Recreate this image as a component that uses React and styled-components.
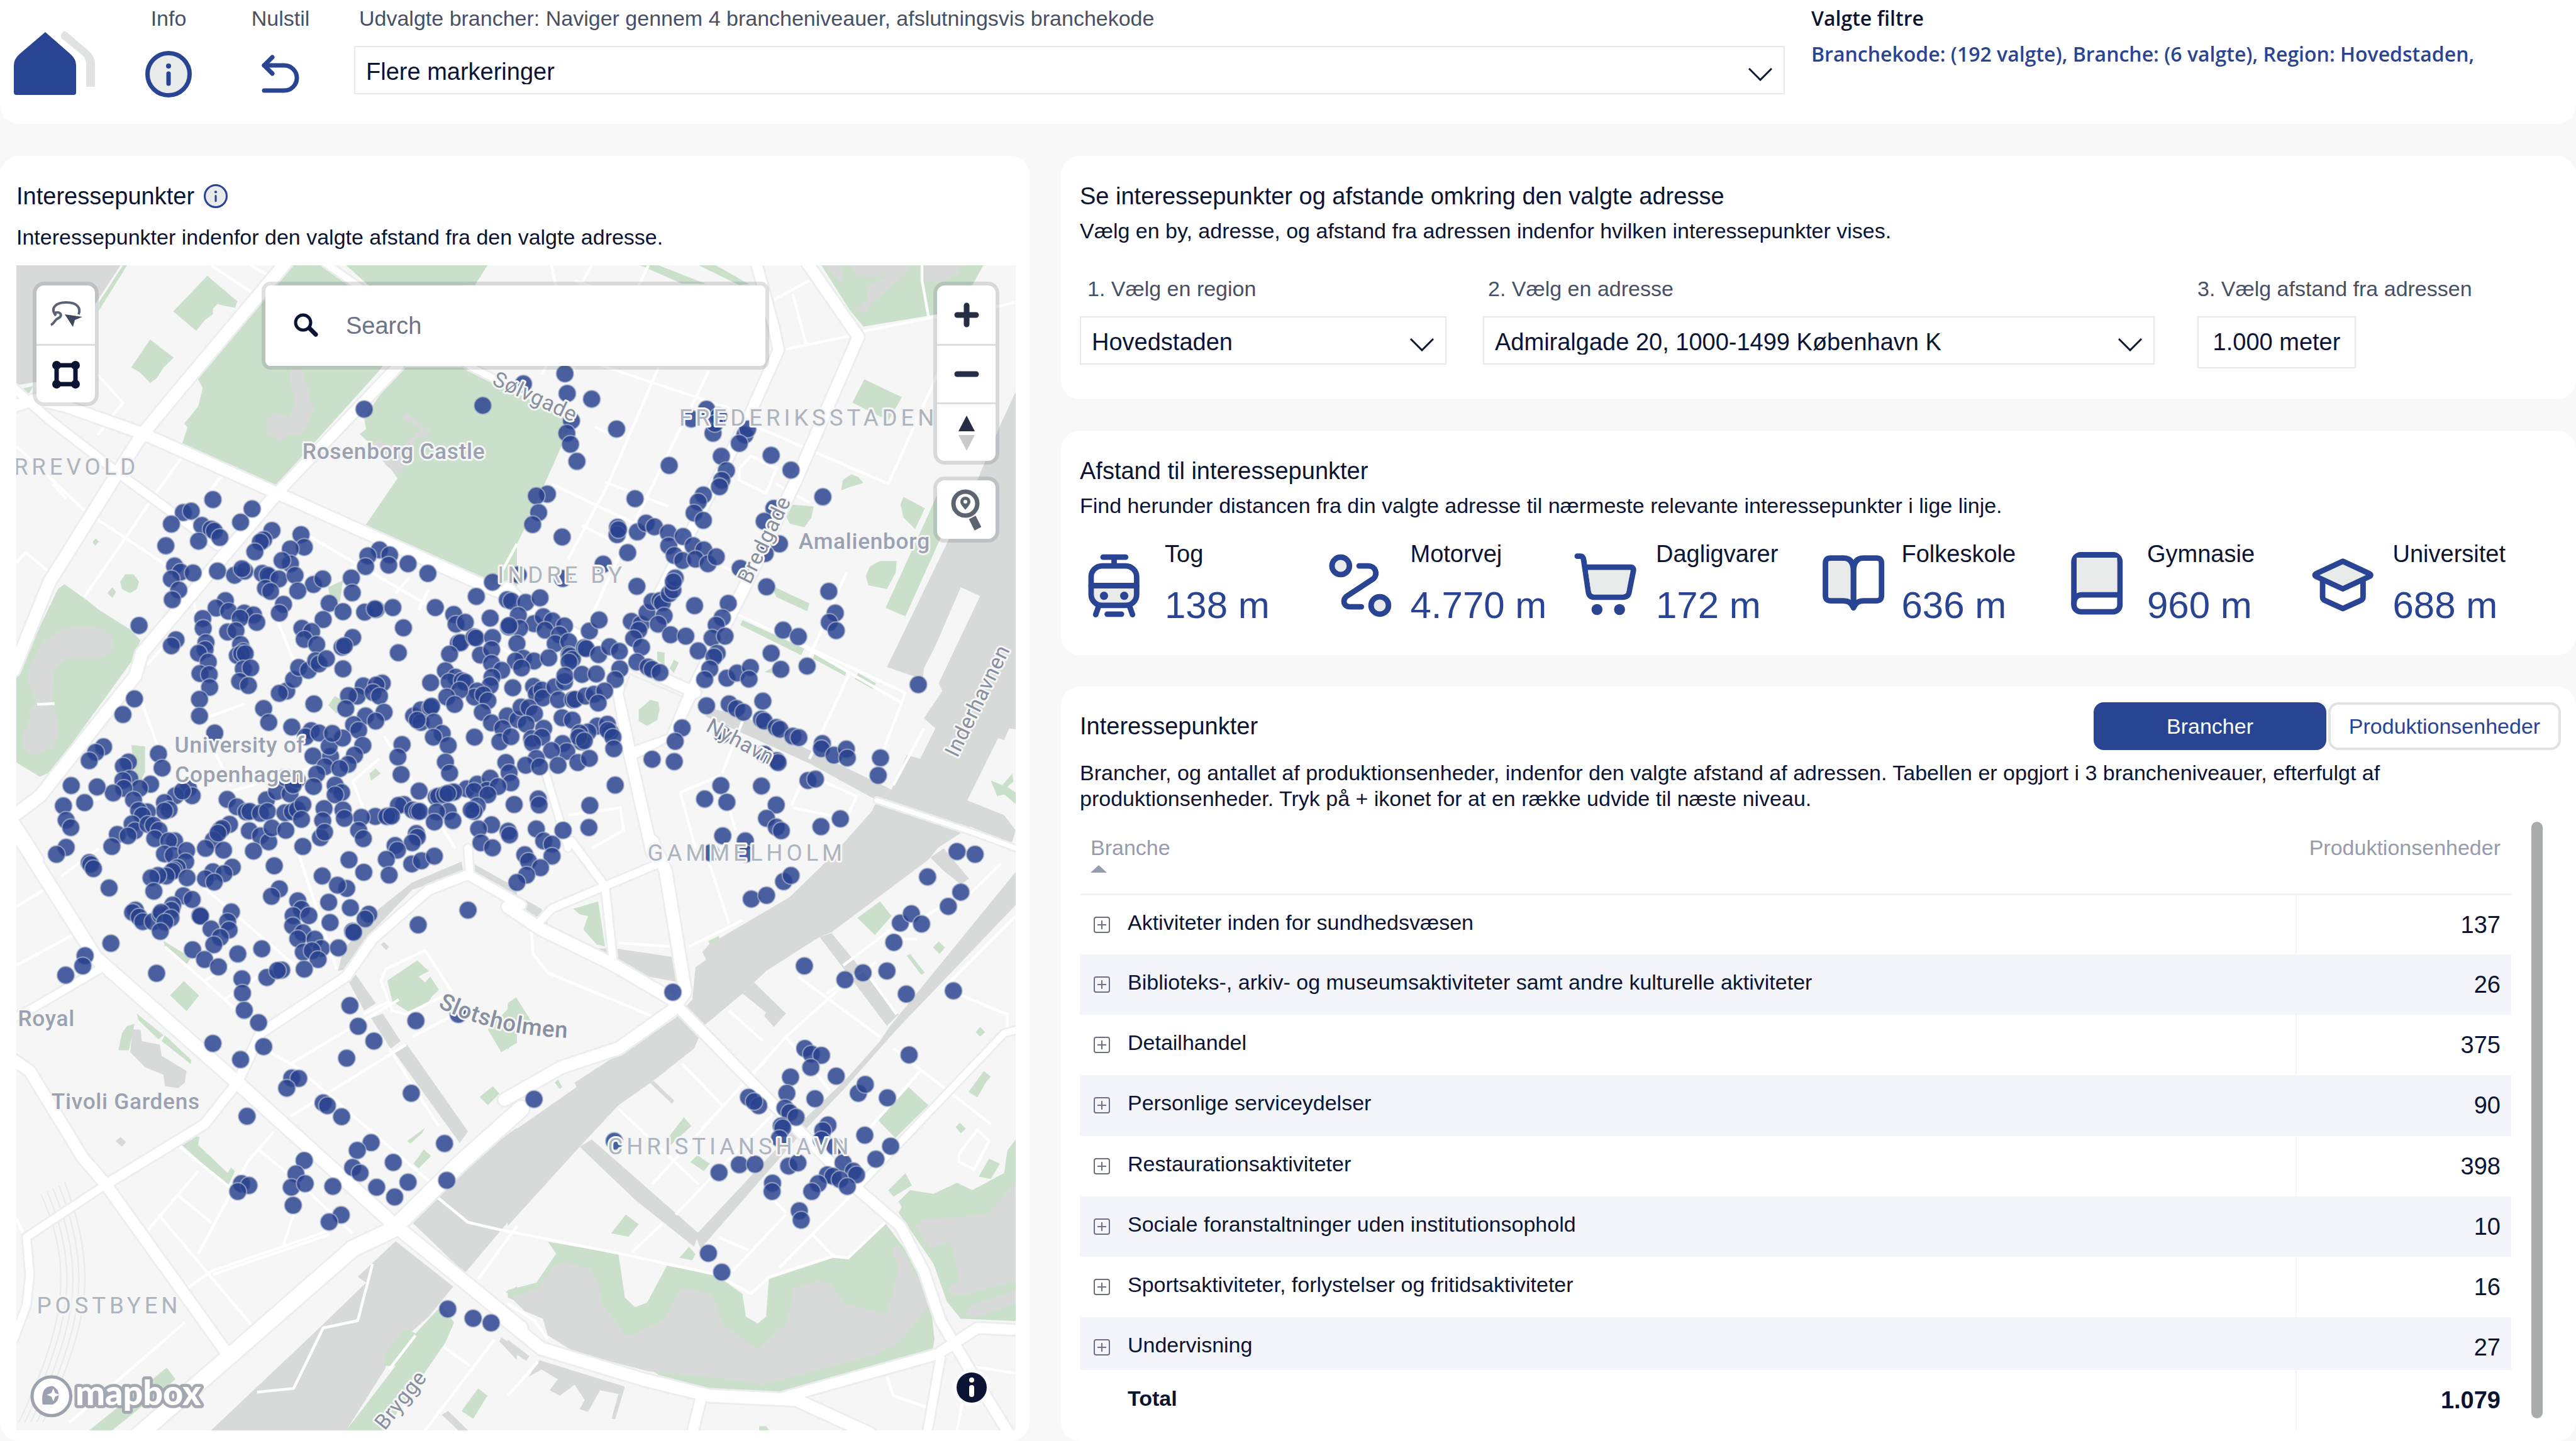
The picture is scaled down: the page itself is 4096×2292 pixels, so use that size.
import * as React from 'react'
import styled, { createGlobalStyle, ThemeProvider } from 'styled-components'

const theme = {
    colors: {
        primary: '#2a4494',
        ink: '#0b1433',
        label: '#485065',
        muted: '#979bae',
        border: '#e9eaeb',
        soft: '#e9ebeb',
        stripe: '#f4f5fa',
        page: '#f8f8f8',
        white: '#ffffff',
        land: '#f6f6f6',
        park: '#cbe0cb',
        water: '#d8dad9',
        casing: '#ecedee',
    },
    sizes: { body: '34px', title: '38px', value: '60px' },
}

const GlobalStyle = createGlobalStyle`
    * { box-sizing: border-box; }
    body {
        margin: 0;
        background: ${theme.colors.page};
        color: ${theme.colors.ink};
        font-family: 'Liberation Sans', Arial, sans-serif;
        font-size: ${theme.sizes.body};
        line-height: 40px;
    }
    button, select, input { font: inherit; color: inherit; }
`

const Page = styled.div`
    display: flex;
    flex-direction: column;
    gap: 51px;
    min-height: 100vh;
`
const Header = styled.header`
    display: grid;
    grid-template-columns: 188px 160px 196px minmax(0, 2294fr) minmax(0, 1258fr);
    height: 197px;
    padding-top: 9px;
    background: ${(props) => props.theme.colors.white};
    border-radius: 0 0 30px 30px;
`
const Logo = styled.svg`
    width: 130px;
    height: 106px;
    margin: 39px 0 0 22px;
`
const ToolButton = styled.button`
    display: flex;
    flex-direction: column;
    align-items: center;
    gap: 32px;
    padding: 0;
    border: none;
    background: none;
    color: ${(props) => props.theme.colors.label};
    line-height: 40px;
    cursor: pointer;
`
const IconSlot = styled.span`
    display: flex;
    align-items: center;
    height: 74px;
`
const FieldBox = styled.div`
    display: flex;
    flex-direction: column;
    align-items: ${(props) => (props.$fit ? 'flex-start' : 'stretch')};
    gap: 24px;
    padding-left: ${(props) => (props.$fit ? 10 : 0)}px;
`
const HeaderField = styled(FieldBox)`
    padding-left: 19px;
`
const FieldLabel = styled.label`
    padding-left: ${(props) => props.$inset || 0}px;
    color: ${(props) => props.theme.colors.label};
`
const SelectWrap = styled.div`
    position: relative;
    svg {
        position: absolute;
        right: 20px;
        top: 34px;
        width: 38px;
        height: 22px;
        pointer-events: none;
    }
`
const StyledSelect = styled.select`
    appearance: none;
    width: 100%;
    height: 77px;
    padding: 4px 70px 0 17px;
    border: 2px solid ${(props) => props.theme.colors.border};
    border-radius: 0;
    background: ${(props) => props.theme.colors.white};
    font-size: ${(props) => props.theme.sizes.title};
`
const DistanceInput = styled.input`
    width: 252px;
    height: 83px;
    padding: 0;
    border: 2px solid ${(props) => props.theme.colors.border};
    background: ${(props) => props.theme.colors.white};
    font-size: ${(props) => props.theme.sizes.title};
    text-align: center;
`
const FilterSummary = styled.div`
    padding-left: 42px;
    font-family: 'Open Sans', 'Noto Sans', sans-serif;
    font-size: 32px;
    font-weight: 600;
    p {
        margin: 0;
    }
    p + p {
        margin-top: 17px;
        color: ${(props) => props.theme.colors.primary};
    }
`
const Columns = styled.main`
    display: grid;
    flex: 1;
    grid-template-columns: minmax(0, 1637fr) minmax(0, 2409fr);
    gap: 50px;
`
const Stack = styled.div`
    display: flex;
    flex-direction: column;
    gap: 50px;
`
const Card = styled.section`
    padding: 42px 24px 45px 30px;
    background: ${(props) => props.theme.colors.white};
    border-radius: 30px;
`
const MapCard = styled(Card)`
    padding: 42px 22px 16px 26px;
`
const FilterCard = styled(Card)`
    padding-bottom: 49px;
`
const TableCard = styled(Card)`
    display: flex;
    flex: 1;
    flex-direction: column;
    padding: 25px 24px 18px 30px;
`
const Title = styled.h2`
    display: flex;
    align-items: center;
    gap: 15px;
    margin: 0;
    font-size: ${(props) => props.theme.sizes.title};
    font-weight: 400;
    line-height: 44px;
`
const Text = styled.p`
    margin: ${(props) => props.$top || 13}px 0 0;
    line-height: ${(props) => props.$leading || 40}px;
`
const FilterRow = styled.div`
    display: grid;
    grid-template-columns: minmax(0, 583fr) minmax(0, 1068fr) minmax(0, 588fr);
    gap: 58px;
    margin-top: 52px;
`
const DistanceList = styled.ul`
    display: grid;
    grid-template-columns: repeat(6, minmax(0, 1fr));
    margin: 35px 16px 0 -4px;
    padding: 0;
    list-style: none;
`
const DistanceItem = styled.li`
    display: flex;
    gap: 22px;
    white-space: nowrap;
    svg {
        flex: none;
        width: 117px;
        height: 117px;
        margin-top: 14px;
    }
`
const DistanceName = styled.div`
    font-size: ${(props) => props.theme.sizes.title};
    line-height: 44px;
`
const DistanceValue = styled.div`
    margin-top: 26px;
    color: ${(props) => props.theme.colors.primary};
    font-size: ${(props) => props.theme.sizes.value};
    line-height: 68px;
`
const TableHeading = styled.div`
    display: flex;
    align-items: center;
    justify-content: space-between;
`
const Toggle = styled.div`
    display: flex;
    gap: 3px;
`
const ToggleButton = styled.button`
    width: 370px;
    height: 76px;
    padding: 0;
    border: 4px solid ${(props) => (props.$active ? props.theme.colors.primary : '#e1e3e3')};
    border-radius: 16px;
    background: ${(props) => (props.$active ? props.theme.colors.primary : props.theme.colors.white)};
    color: ${(props) => (props.$active ? props.theme.colors.white : props.theme.colors.primary)};
    cursor: pointer;
`
const TableArea = styled.div`
    display: flex;
    flex: 1;
    gap: 32px;
    margin-top: 16px;
    padding-right: 29px;
`
const Table = styled.table`
    flex: 1;
    border-collapse: collapse;
    th, td {
        padding: 0 17px;
        text-align: left;
        vertical-align: middle;
    }
    tr > :last-child {
        width: 342px;
        text-align: right;
    }
`
const HeadCell = styled.th`
    height: 115px;
    border-bottom: 3px solid #f2f3fa;
    color: ${(props) => props.theme.colors.muted};
    font-weight: 400;
    && {
        padding-top: 21px;
        vertical-align: top;
    }
    svg {
        display: block;
        width: 26px;
        height: 12px;
        margin-top: 8px;
    }
`
const BodyRow = styled.tr`
    height: 96px;
    &:nth-child(even) {
        background: ${(props) => props.theme.colors.stripe};
    }
    &:last-child {
        height: 84px;
    }
    &:last-child td {
        padding-top: 12px;
    }
`
const NumberCell = styled.td`
    border-left: 2px solid ${(props) => props.theme.colors.stripe};
    font-size: ${(props) => props.theme.sizes.title};
`
const NameCell = styled.div`
    display: flex;
    align-items: center;
    gap: 28px;
    padding: 0 0 8px 5px;
`
const ExpandButton = styled.button`
    display: flex;
    padding: 8px 0 0;
    border: none;
    background: none;
    cursor: pointer;
    svg {
        width: 26px;
        height: 26px;
    }
`
const TotalRow = styled.tr`
    height: 95px;
    font-weight: 700;
    td:first-child {
        padding: 0 0 6px 76px;
    }
`
const ScrollThumb = styled.div`
    width: 18px;
    margin-bottom: 18px;
    border-radius: 9px;
    background: #a9abad;
`
const MapFrame = styled.div`
    position: relative;
    margin-top: 25px;
`
const MapSvg = styled.svg`
    display: block;
    width: 100%;
    height: auto;
    background: ${(props) => props.theme.colors.land};
    text {
        font-family: Roboto, 'Noto Sans', sans-serif;
        paint-order: stroke;
        stroke: #f6f6f6;
        stroke-width: 8px;
        stroke-linejoin: round;
    }
`
const Floating = styled.div`
    position: absolute;
    display: flex;
    flex-direction: column;
    border: 6px solid rgba(70, 84, 96, 0.18);
    border-radius: 18px;
    background: ${(props) => props.theme.colors.white};
    background-clip: padding-box;
`
const DrawTools = styled(Floating)`
    top: 26px;
    left: 26px;
`
const ZoomTools = styled(Floating)`
    top: 26px;
    right: 26px;
`
const PinTools = styled(Floating)`
    top: 336px;
    right: 26px;
`
const MapButton = styled.button`
    display: flex;
    align-items: center;
    justify-content: center;
    width: 93px;
    height: 93px;
    padding: 0;
    border: none;
    background: none;
    cursor: pointer;
    & + & {
        border-top: 3px solid #dcdedf;
    }
    svg {
        width: 60px;
        height: 66px;
    }
`
const SearchBox = styled(Floating)`
    top: 26px;
    left: 390px;
    right: 392px;
    flex-direction: row;
    align-items: center;
    height: 140px;
    padding-left: 42px;
    border-radius: 14px;
    svg {
        flex: none;
        width: 44px;
        height: 44px;
    }
`
const SearchInput = styled.input`
    flex: 1;
    min-width: 0;
    height: 100%;
    padding: 0 0 0 42px;
    border: none;
    outline: none;
    background: none;
    font-size: ${(props) => props.theme.sizes.title};
    &::placeholder {
        color: #6d7486;
        opacity: 1;
    }
`
const AttributionButton = styled.button`
    position: absolute;
    right: 40px;
    bottom: 38px;
    padding: 6px;
    border: none;
    border-radius: 50%;
    background: rgba(255, 255, 255, 0.5);
    cursor: pointer;
    svg {
        display: block;
        width: 48px;
        height: 48px;
    }
`

const sheets = {
    nw: { x: 0, y: 560, w: 1120, h: 1280 },
    ne: { x: 1100, y: 560, w: 1140, h: 1280 },
    sw: { x: 0, y: 1840, w: 1120, h: 1284 },
    se: { x: 1100, y: 1840, w: 1140, h: 1284 },
    west: { x: 0, y: 1400, w: 800, h: 760 },
    centre: { x: 700, y: 1150, w: 800, h: 800 },
}

const project = (sheet, text) => {
    const { x, y, w, h } = sheets[sheet]
    return text
        .trim()
        .split(/\s+/)
        .map((pair) => pair.split(',').map(Number))
        .map(([px, py]) => [Math.round(x + (px * w) / 1568), Math.round(y + (py * h) / 1568)])
}
const toPoints = (sheet, text) => project(sheet, text).map((point) => point.join(',')).join(' ')

const parks = {
    nw: [
        '372,20 385,20 300,140 300,118',
        '628,48 720,115 712,132 680,128 660,122 645,135 645,150 620,165 595,193 525,142',
        '455,217 527,265 495,292 475,320 455,332 425,305 397,290',
        '890,20 985,20 1110,110 1240,200 1150,300 830,610 550,498 568,450 558,440 600,395 615,345 598,318',
        '1050,20 1478,20 1440,72 1120,75',
        '1210,290 1420,290 1568,365 1568,885 1470,860 1100,720 1205,585 1150,515 1090,468 1110,455 1105,425',
        '195,866 265,910 300,935 390,985 425,1015 400,1070 155,1365 120,1378 49,1340 49,1110 175,880',
        '380,840 405,840 422,860 415,880 393,890 370,880 364,860',
        '325,890 340,875 352,887 340,903',
        '280,755 290,745 300,753 288,764',
        '398,1293 440,1297 440,1365 422,1400 405,1350',
        '1120,1370 1140,1356 1155,1370 1125,1388',
        '995,1188 1015,1164 1040,1175 1020,1210',
        '995,875 1040,856 1030,915 1000,900',
        '49,350 100,340 90,358 49,372',
    ],
    ne: [
        '28,360 195,430 185,450 50,720 0,810 0,360',
        '395,20 450,20 590,68 520,68',
        '570,20 620,20 720,70 690,72',
        '935,20 1418,20 1385,72 1280,150 1060,183 1020,140',
        '1063,322 1175,370 1155,400 1135,432 1085,410 1028,385',
        '995,617 998,590 1025,575 1045,582 1060,598 1015,610',
        '830,685 850,655 912,660 905,690 885,715 840,705',
        '1170,655 1180,635 1243,665 1215,720 1180,690',
        '1300,590 1245,700 1127,930 1185,952 1290,745',
        '1068,845 1080,820 1110,805 1160,805 1157,835 1130,880 1075,870',
        '785,870 900,918 892,938 800,900',
        '700,962 885,1037 875,1055 693,975',
        '915,1050 1012,1095 1005,1110 910,1065',
        '1045,1103 1098,1130 1090,1145 1035,1118',
        '445,1045 468,1048 467,1080 445,1070',
        '483,1090 495,1067 510,1075 495,1103',
        '765,1100 815,1075 810,1105',
    ],
    sw: [
        '495,245 580,290 565,308 500,262',
        '557,352 603,390 565,431 515,390',
        '415,437 495,495 480,505 420,455',
        '500,495 580,560 578,572 490,510',
        '385,470 408,465 390,535 358,535 370,490',
        '545,780 580,758 605,765 600,785 690,860 700,845 712,855 690,895',
        '270,1541 505,1375 532,1405 340,1541',
        '1175,350 1265,297 1300,325 1270,340 1290,355 1305,340 1332,375 1310,392 1300,405 1240,433 1190,405',
        '1455,658 1495,630 1515,650 1480,680',
        '1568,400 1480,480 1520,540 1568,515',
        '1235,775 1290,740 1280,755 1245,782',
        '1255,835 1285,797 1308,815 1270,848',
        '1400,1490 1450,1430 1478,1450 1435,1510',
        '1533,1175 1568,1160 1568,1190',
    ],
    se: [
        '195,160 270,140 290,260 265,255 225,215 240,180 215,175',
        '0,410 25,395 75,465 40,465 0,535',
        '1043,185 1110,140 1145,180 1095,230',
        '598,245 630,232 632,248 605,262',
        '1190,285 1200,280 1243,330 1232,335',
        '1268,262 1285,247 1304,262 1287,280',
        '1395,487 1408,473 1423,487 1408,498',
        '1195,632 1255,680 1155,767 1105,720',
        '1420,590 1440,605 1425,620 1400,660 1374,645',
        '1335,738 1348,726 1366,742 1350,755',
        '1405,870 1435,822 1468,835 1440,875',
        '1135,905 1185,860 1205,893 1150,922',
        '308,1020 352,970 390,995 360,1028',
        '480,765 525,712 547,735 480,790',
        '545,830 565,812 603,835 585,855',
        '512,1085 540,1055 560,1075 550,1090',
        '750,1530 770,1530 780,1541 750,1541',
        '140,620 150,612 162,632 155,637',
        '120,1042 330,1075 350,1190 380,1215 415,1203 475,1105 620,1130 700,1180 710,1240 745,1258 770,1240 778,1140 970,1085 1015,1088 1125,992 1200,1080 1260,1200 1272,1300 1265,1335 820,1443 600,1430 450,1395 300,1300 0,1190 0,1170 85,1150 145,1073',
        '1514,770 1490,800 1480,860 1385,905 1340,885 1270,915 1200,905 1165,935 1175,950 1165,965 1270,1100 1310,1200 1350,1245 1514,1252',
    ],
}

const waters = {
    nw: [
        '49,20 365,20 290,120 110,330 49,338',
        '880,290 915,295 950,400 930,450 905,472 880,470 845,488 810,465 808,430 830,410 875,425 895,385 880,330',
        '1232,410 1305,460 1295,475 1270,475 1245,500 1235,540 1210,578 1170,550 1130,500 1140,485 1180,495 1225,500 1275,452 1218,425',
        '255,978 310,985 343,1010 335,1050 300,1065 200,1065 165,1090 160,1180 180,1260 160,1300 100,1323 70,1300 72,1260 90,1230 88,1200 110,1180 85,1130 90,1080 130,1020 190,985',
    ],
    ne: [
        '945,20 990,20 1002,50 995,68 975,50',
        '1020,20 1195,20 1195,35 1085,120 1065,145 1030,142 1070,110 1072,75 1140,45 1095,52 1040,48',
        '1240,20 1350,20 1345,40 1290,65 1235,60',
        '1514,355 1470,440 1400,590 1130,1087 1238,1120 1240,1090 1275,1030 1350,875 1408,898 1285,1130 1295,1150 1240,1222 1275,1250 1230,1330 1190,1320 1145,1412 1100,1440 1085,1470 975,1580 1260,1580 1380,1510 1500,1560 1514,1520 1480,1480 1370,1440 1462,1275 1480,1280 1495,1250 1514,1252',
        '600,1195 700,1215 860,1290 1145,1412 1100,1440 905,1345 590,1218',
    ],
    sw: [
        '400,480 425,480 430,510 485,520 490,550 565,590 560,620 540,635 500,630 495,600 440,580 395,540',
        '1025,325 1040,270 1150,160 1250,90 1400,35 1405,65 1250,110 1130,220 1080,315',
        '1435,40 1568,105 1568,150 1440,75',
        '1055,350 1080,335 1140,410 1105,430',
        '1125,450 1160,437 1215,510 1185,530',
        '1195,540 1235,520 1420,750 1395,780',
        '1568,740 1470,800 1250,990 1410,1125 1570,960',
        '1200,1040 1375,1160 1300,1240 1165,1345 1170,1375 1050,1541 640,1541 950,1285 1110,1150 1085,1135',
        '350,775 365,765 382,778 370,790',
        '1155,255 1163,248 1180,260 1172,270',
        '1520,1295 1568,1320 1568,1355 1515,1305',
        '1340,1500 1360,1490 1420,1541 1390,1541',
    ],
    se: [
        '0,110 100,160 120,200 270,265 320,265 505,290 515,355 300,320 100,200 0,140',
        '990,0 840,130 600,255 580,275 592,295 560,315 550,400 500,450 295,565 200,620 205,632 0,760 0,1000 215,790 330,680 430,618 555,530 585,470 700,385 735,355 770,325 930,235 965,222 1255,30 1290,-10 1000,-10',
        '215,790 250,770 570,1020 555,1055 380,930',
        '560,1025 880,720 1010,610 1110,510 1140,470 1514,62 1514,150 1160,480 1000,640 870,760 575,1060',
        '930,235 965,225 1165,440 1130,470',
        '700,385 735,355 830,437 793,472 765,445 770,435',
        '425,622 435,615 496,668 490,676',
        '1260,25 1300,0 1375,80 1350,95 1300,60',
        '10,1190 90,1165 140,1105 170,1095 245,1115 270,1150 280,1205 355,1292 465,1250 510,1175 530,1165 605,1180 625,1215 645,1265 745,1328 835,1255 850,1165 930,1145 965,1155 1000,1205 1130,1233 1165,1110 1145,1060 1160,1050 1175,1060 1230,1150 1255,1210 1165,1310 1100,1340 760,1420 600,1400 420,1385 200,1335 120,1290 105,1245 50,1225',
        '1514,885 1430,968 1320,978 1240,982 1215,1000 1260,1060 1315,1040 1330,1070 1345,1150 1315,1160 1320,1180 1365,1182 1514,1145',
        '1514,1170 1380,1212 1365,1228 1390,1243 1514,1205',
        '95,1355 350,1425 320,1512 310,1510 330,1445 275,1435 240,1492 215,1485 230,1460 200,1420 155,1450 125,1435 150,1405 100,1380 62,1400',
        '0,1300 65,1345 55,1357 0,1325',
    ],
}

// Greens that lie on quays, above the water.
const quayParks = {
    ne: ['1440,1388 1475,1400 1505,1370 1508,1390 1490,1405 1514,1420 1514,1450 1480,1425 1460,1430 1452,1415'],
    sw: ['1340,1210 1378,1255 1350,1310 1200,1500 1170,1541 1050,1541 1200,1370 1165,1370 1165,1340 1230,1270 1260,1285'],
}

const mainRoads = [
    ['nw', 24, '40,395 110,375 200,395 430,465 840,625 1480,875 1568,905'],
    ['nw', 26, '870,10 520,375 430,470 350,580 200,790 150,860 40,1095'],
    ['nw', 18, '40,345 150,430 355,570 660,765'],
    ['nw', 26, '840,625 640,830 430,1050 410,1110 120,1430 30,1490'],
    ['nw', 22, '840,625 1160,330 1210,285'],
    ['nw', 14, '980,10 1110,90 1430,290 1568,350'],
    ['nw', 28, '30,1490 60,1530 110,1600'],
    ['ne', 22, '740,10 795,190 808,245 720,420 460,880 350,1070'],
    ['ne', 24, '890,10 1045,210 860,590 720,850 550,1150 490,1260 365,1320'],
    ['ne', 22, '0,875 60,930 350,1070 560,1155'],
    ['ne', 24, '325,1120 365,1320 430,1580'],
    ['ne', 14, '110,1360 180,1568'],
    ['ne', 10, '1100,1440 1400,1530 1514,1568'],
    ['sw', 28, '50,-40 290,290 720,620 1200,1000 1420,1155 1580,1270'],
    ['sw', 24, '40,560 90,590 250,820 320,890 690,1340'],
    ['sw', 34, '400,1568 690,1350 1070,1060 1190,1010 1400,830 1580,690'],
    ['sw', 20, '320,890 620,730 720,620 790,490 1050,340 1130,240 1300,110 1420,70 1580,150'],
    ['sw', 16, '320,310 95,425 40,450'],
    ['sw', 16, '320,890 200,960 80,1030 90,1130 80,1210 40,1300'],
    ['sw', 16, '1425,70 1420,0'],
    ['se', 26, '0,155 100,215 310,305 480,395'],
    ['se', 26, '430,-20 470,60 530,380 490,430 330,530 160,580 -10,665'],
    ['se', 22, '480,395 860,740 1040,900 1170,1000 1240,1120 1290,1250 1390,1400 1500,1560'],
    ['se', 16, '90,200 130,160 290,100 450,40'],
    ['se', 16, '190,-20 290,100 315,305'],
    ['se', 26, '-10,1245 100,1325 400,1405 600,1450 860,1460 1080,1550'],
    ['se', 22, '820,1455 1280,1340 1400,1270 1514,1275'],
    ['se', 18, '1290,1350 1250,1550'],
    ['se', 22, '575,1460 550,1550'],
    ['se', 14, '1040,900 1480,490 1520,480'],
]

const streets = {
    nw: [
        '112,1186 165,1183', '295,310 372,385 295,470', '270,700 370,580', '49,500 255,670', '75,780 150,835',
        '295,695 510,820', '49,810 80,780', '255,900 380,745 460,640 550,530', '640,20 770,95', '760,20 810,45',
        '640,615 670,580', '580,890 600,960', '840,960 890,1070', '920,730 1568,1060', '1040,850 1130,770',
        '430,1180 500,1350', '630,1220 740,1185', '1200,890 1240,850', '1270,935 1300,880', '1070,1390 1150,1330',
        '1165,1270 1380,1568', '650,1310 700,1400', '690,1420 960,1350', '1070,1390 1110,1480', '445,1080 520,1010',
        '1568,760 1480,900', '160,600 200,640', '230,1450 330,1430',
    ],
    ne: [
        '60,220 730,420', '130,600 460,740', '290,595 480,660', '450,290 300,600 180,800', '600,300 400,660 230,990',
        '720,440 1135,600 1290,290', '795,110 900,60', '850,95 890,230', '830,243 1020,207', '1060,195 1280,155',
        '1235,20 1235,60 1255,155', '690,560 725,525 800,560 770,625 690,590 690,560', '800,600 900,650',
        '640,820 690,840', '680,945 1185,1155 1110,1330', '820,1000 1170,1180', '1010,835 880,1100',
        '1020,1100 900,1330', '515,1420 635,1375', '515,1420 560,1568', '700,1230 640,1370', '640,1400 680,1520',
        '845,1455 890,1370 1040,1430 1010,1490 850,1460', '200,310 130,20', '250,20 200,100', '350,150 420,20',
        '480,110 400,250', '220,710 380,780', '340,480 260,450', '180,1480 335,1460 345,1520 250,1568',
        '1240,1250 1150,1400', '1455,130 1514,118', '100,310 120,280', '200,60 760,240',
    ],
    sw: [
        '49,155 150,100', '49,310 230,225', '185,75 300,0', '560,60 920,330', '500,260 720,430', '800,530 900,580 1300,880',
        '830,750 750,830 600,1075', '600,855 430,1030', '530,780 700,900', '480,970 770,1270', '540,920 640,990',
        '560,1170 640,1120 990,1015', '645,1128 1000,1022', '210,1520 560,1255', '780,795 900,880 1070,1020',
        '880,570 1210,400', '880,710 1230,520', '1155,350 1170,320 1290,270 1370,380 1230,440 1190,430 1155,350',
        '1100,440 1180,405', '900,0 1020,320', '860,1050 890,970', '1320,920 1420,990 1540,1015', '1180,530 1330,735',
        '1250,500 1400,430', '1345,1320 1425,1370', '1500,1300 1290,1541', '49,980 75,1030', '1450,1140 1568,1000',
        '780,1440 890,1430 980,1270 1085,1250 1130,1100', '620,350 700,310', '680,400 780,340', '1180,1380 1260,1290',
    ],
    se: [
        '-10,1012 330,1072 620,1128 725,1180 780,1135 970,1080 1015,1085 1125,992', '520,570 640,680', '660,430 760,510',
        '430,890 830,500', '500,970 860,640', '865,340 1110,500', '830,500 990,370', '950,385 1100,300', '330,690 570,890',
        '580,740 770,560', '630,1030 720,1065', '670,1120 830,970', '910,1025 970,1080', '810,1110 1100,850', '780,920 830,965',
        '1345,810 1400,745 1435,775 1390,850 1345,830 1345,810', '1150,530 1440,730', '1514,180 1300,370 1490,440 1490,490',
        '1230,590 1040,780', '0,1450 90,1360', '1130,1400 1150,1450 1250,1480', '330,250 490,260', '590,10 660,200',
        '370,1070 460,995', '540,260 700,190', '70,210 75,280 120,330 430,445', '1000,310 1210,170', '1130,240 1300,150',
        '1140,240 1220,240', '0,1205 80,1250 120,1300', '1340,1541 1370,1400', '1370,1370 1514,1390', '700,600 780,680',
        '830,500 960,640', '1070,330 1160,440', '1470,40 1380,120',
    ],
}

const dots = {
    nw: '1104,402 1464,392 646,642 765,666 729,702 556,676 580,672 520,707 612,710 640,720 649,725 666,742 602,752 503,765 825,724 800,748 790,755 773,780 913,735 922,768 881,773 880,812 855,803 529,818 548,834 520,853 585,837 542,882 522,908 660,832 711,843 742,832 733,826 795,838 818,846 812,843 845,852 895,843 950,867 978,853 805,877 820,886 903,884 860,920 847,943 422,976 683,910 655,930 693,938 740,943 768,948 728,957 778,968 615,958 616,984 690,994 715,990 533,1014 520,1030 625,1022 622,1040 602,1050 730,1026 738,1045 998,918 980,961 916,984 945,992 922,1013 960,1027',
    west: '1008,45 1025,38 1040,38 884,74 849,126 888,130 890,187 847,242 846,316 571,240 522,309 1033,105 1065,102 1017,160 1055,180 1218,204 1186,214 1246,152 1268,100 1310,112 1340,68 1355,82 1385,60 1333,262 1120,282 1140,345 1238,366 912,393 1322,382 1298,408 1355,393 1328,495 1403,498 1397,452 1380,543 1344,575 1330,632 440,453 405,478 378,516 673,485 688,548 545,522 523,540 550,597 522,605 638,621 592,640 525,640 480,661 302,628 411,633 358,704 567,691 268,719 281,781 299,815 280,904 239,935 800,640 815,672 745,672 775,652 697,704 718,735 698,740 625,745 588,738 603,762 560,798 573,830 497,845 543,853 474,900 628,800 650,805 675,828 657,865 740,875 715,875 697,932 735,938 792,918 788,968 753,995 738,1005 731,1010 705,1032 670,1030 641,1040 653,1100 794,1040 378,972 385,980 396,998 463,1086 964,690 1005,722 1045,745 1060,742 975,800 935,825 942,820 905,870 873,907 948,916 925,840 1130,692 1175,655 1230,665 1212,592 1260,600 1245,625 1105,752 1135,742 1058,830 1105,852 1140,878 1155,818 1214,828 1209,748 1240,745 1263,735 1285,712 1280,777 1376,730 1370,785 1360,860 1378,835 1285,899 1077,921 1165,986 986,992 903,1012 950,1022 873,1043 910,1058 1369,1031 1396,1150 1402,1240 1185,1090 1152,1122 1265,1143 1280,1180 1245,1208 1312,1210 1242,1255 1285,1285 1265,1312 1337,1315 1365,1355 1287,1372 1325,1365 1350,1404 1292,1448 778,1120 815,1136 733,1162 728,1185 575,1185 562,1195 590,1215 605,1235 648,1235 680,1205 685,1195 725,1220 700,1238 680,1280 848,1208 850,1212 982,1192 966,1235 973,1273 895,1268 935,1305 908,1340 470,1332 361,1388 350,1433 278,1476 817,1362 869,1404 928,1439 1010,1381 1112,1358 665,1466 1027,1492 1133,1485 1195,1452 1178,1455',
    centre: '240,85 190,110 282,105 181,155 279,148 360,143 444,185 120,204 123,266 85,347 177,348 226,337 220,335 295,330 477,329 342,416 319,521 125,456 80,498 90,492 84,590 650,282 720,222 830,190 1018,205 1190,145 1293,97 782,295 800,302 861,307 922,288 1333,240 555,358 565,400 603,392 710,375 830,362 895,398 935,368 835,418 788,411 790,405 975,386 942,425 1025,408 1003,445 1130,430 1173,382 575,480 585,478 640,455 648,458 720,457 538,527 668,532 715,508 824,482 985,482 1042,475 715,567 850,545 818,556 895,556 958,543 843,587 758,595 1045,530 1048,535 1058,548 1045,560 1110,500 1117,503 1170,530 1218,495 1258,515 519,598 563,625 456,648 535,645 590,640 603,647 718,625 710,660 805,670 655,685 643,710 680,700 580,680 525,710 700,725 558,740 677,775 893,665 905,695 930,680 932,713 983,667 1025,645 1027,620 1100,613 1160,612 1260,590 1241,636 1310,388 1350,400 1340,425 1375,350 1320,460 1398,303 1430,300 1440,310 1448,365 1422,400 1470,270 1485,255 1495,203 1488,220 1352,498 1475,445 1333,560 1380,582 1398,592 1430,605 1000,722 1060,722 1070,720 1115,705 1150,697 1195,685 1168,735 170,663 250,650 225,658 145,705 108,703 96,758 212,690 240,705 258,775 180,790 223,812 385,790 415,765 455,755 460,748 415,818 470,815 400,808 130,828 150,850 82,883 40,865 169,915 134,957 105,995 70,1013 505,865 468,880 531,915 643,880 335,912 317,964 331,1039 519,985 537,1033 715,820 783,790 762,843 827,805 840,752 875,755 898,780 862,825 937,843 750,900 797,878 885,885 930,880 890,905 1015,798 1058,808 1165,833 1208,825 1220,858 1210,850 1230,880 1125,858 1090,862 1097,900 1235,930 1085,880 1110,895 1018,908 1035,940 970,937 905,970 777,988 860,1000 920,1005 997,1000 1081,987 1131,970 1240,1084 790,1030 797,1075 50,1083 78,1115 50,1125 408,1110 610,1100 655,1080 710,1055 695,1105 743,1090 640,1110 545,1115 555,1113 480,1135 490,1130 515,1125 530,1120 700,1125 655,1173 640,1195 630,1190 811,1166 913,1143 917,1168 1133,1170 1129,1265 343,1167 320,1170 280,1215 222,1217 163,1222 270,1218 290,1215 380,1190 400,1195 410,1195 532,1195 483,1198 550,1235 473,1240 85,1190 90,1225 150,1275 171,1312 395,1290 400,1305 378,1328 305,1340 316,1360 268,1400 281,1467 377,1420 418,1405 472,1386 110,1402 172,1454 100,1523 60,1510 715,1253 660,1270 785,1280 792,1295 670,1328 720,1350 905,1270 1020,1275 937,1322 973,1335 973,1385 857,1380 872,1407 923,1435 865,1467 824,1497 1525,840 1495,898 1398,975 1492,983',
    ne: '170,308 178,360 47,335 250,375 325,455 190,432 176,466 187,495 207,540 481,551 593,402 548,428 612,465 628,420 618,440 707,470 715,455 691,492 637,527 652,565 638,590 631,607 786,524 845,564 940,635 583,630 568,648 555,677 583,697 380,640 118,627 85,632 92,676 74,708 162,741 328,715 326,735 330,722 387,728 413,704 438,714 478,730 480,765 496,790 521,804 523,740 553,765 585,775 560,800 597,812 622,794 793,665 765,700 810,760 768,785 693,825 771,873 957,886 976,943 959,968 979,990 658,918 557,924 640,955 622,975 610,1010 648,1005 531,1005 568,1044 625,1050 615,1060 603,1092 587,1120 654,1116 683,1103 724,1088 719,1118 821,988 867,1006 786,1050 814,1093 893,1084 1224,1133 593,1190 660,1185 682,1197 703,1207 761,1177 757,1225 765,1230 800,1247 812,1252 850,1270 868,1274 938,1290 935,1303 973,1320 1010,1305 1012,1328 1111,1328 1104,1374 895,1388 917,1384 640,1265 765,1318 802,1335 806,1340 635,1402 587,1437 653,1445 757,1403 801,1453 772,1488 800,1512 815,1522 934,1510 992,1490 641,1535 708,1548',
    sw: '1062,157 1026,264 1118,175 1108,187 1070,220 1072,222 1268,203 1420,164 1061,416 1087,471 1134,510 1052,556 1262,457 1390,440 1248,649 1036,711 1348,781 1125,779 1084,800 1193,832 1070,845 1092,860 1238,884 1355,879 1142,898 1197,923 1035,971 1358,1220 1435,1244 1490,1256 735,384 741,429 784,462 799,525 645,516 729,559 749,709 885,608 906,609 870,635 980,674 993,681 922,827 898,862 884,897 926,888 889,945 1009,895 732,888 755,893 721,909 998,989',
    se: '1340,8 1393,16 605,12 710,15 726,134 771,124 823,88 844,72 1251,76 1350,116 1314,154 1171,198 1203,173 1234,200 1151,249 885,311 1005,348 1059,330 1131,325 1188,386 1328,377 493,381 79,664 318,776 886,530 905,545 935,548 904,580 843,606 979,603 1197,547 1046,648 1066,625 1132,661 832,649 916,663 718,659 748,681 735,670 827,688 840,700 860,712 815,735 820,740 810,768 955,733 940,747 935,772 975,790 1065,760 1141,789 1097,823 630,859 690,838 737,836 838,842 865,833 790,887 788,908 1000,833 1030,855 1040,865 953,865 970,868 990,877 1012,895 925,888 907,908 869,960 875,984 598,1072 638,1122',
}

const labelStyles = {
    district: { fontSize: 50, letterSpacing: 8, fill: '#adb4be' },
    place: { fontSize: 48, fontWeight: 500, letterSpacing: 1, fill: '#9aa2b2' },
    street: { fontSize: 46, letterSpacing: 1, fill: '#8890a0' },
}

const labels = [
    ['district', 'ØRREVOLD', 144, 1030],
    ['district', 'FREDERIKSSTADEN', 1752, 924],
    ['district', 'INDRE BY', 1217, 1265],
    ['district', 'GAMMELHOLM', 1618, 1867],
    ['district', 'CHRISTIANSHAVN', 1582, 2503],
    ['district', 'POSTBYEN', 236, 2849],
    ['place', 'Rosenborg Castle', 853, 996],
    ['place', 'Amalienborg', 1873, 1191],
    ['place', 'University of', 519, 1632],
    ['place', 'Copenhagen', 519, 1697],
    ['place', 'Royal', 100, 2225],
    ['place', 'Tivoli Gardens', 272, 2405],
    ['street', 'Sølvgade', 1153, 875, 25],
    ['street', 'Bredgade', 1670, 1178, -64],
    ['street', 'Inderhavnen', 2132, 1527, -64],
    ['street', 'Nyhavn', 1597, 1622, 28],
    ['street', 'Brygge', 880, 3046, -51],
]

const Areas = ({ data, fill }) =>
    Object.entries(data).flatMap(([sheet, shapes]) => shapes.map((shape) => <polygon key={sheet + shape} points={toPoints(sheet, shape)} fill={fill} />))

const Streets = ({ color, width }) => (
    <g fill="none" stroke={color} strokeWidth={width} strokeLinejoin="round">
        {Object.entries(streets).flatMap(([sheet, lines]) => lines.map((line) => <polyline key={sheet + line} points={toPoints(sheet, line)} />))}
    </g>
)

const MainRoads = ({ color, extra }) => (
    <g fill="none" stroke={color} strokeLinejoin="round" strokeLinecap="round">
        {mainRoads.map(([sheet, width, line]) => (
            <polyline key={sheet + line} points={toPoints(sheet, line)} strokeWidth={width + extra} />
        ))}
    </g>
)

const CityMap = () => (
    <MapSvg viewBox="35 576 2166 2526" role="img" aria-label="Kort over interessepunkter">
        <Areas data={parks} fill={theme.colors.park} />
        <Areas data={waters} fill={theme.colors.water} />
        <Areas data={quayParks} fill={theme.colors.park} />
        <g fill="none" stroke="#e8ebeb" strokeWidth="3">
            {[0, 13, 26, 39, 52].map((shift) => (
                <path key={shift} d={`M${88 + shift} ${2590 - shift / 2} Q${140 + shift} 2700 ${130 + shift} 2810 T${40 + shift} 3085`} />
            ))}
        </g>
        <Streets color="#ffffff" width={6} />
        <MainRoads color={theme.colors.casing} extra={8} />
        <MainRoads color="#ffffff" extra={0} />
        <polygon points={toPoints('ne', '365,1105 520,1165 475,1265 380,1295 345,1155')} fill={theme.colors.land} stroke={theme.colors.casing} strokeWidth="4" />
        <polygon points={toPoints('ne', '425,1173 450,1180 453,1200 445,1228 415,1243 390,1230 390,1200')} fill={theme.colors.park} />
        <g fill="#28418f" fillOpacity="0.84" stroke="#b9c2cf" strokeOpacity="0.6" strokeWidth="3">
            {Object.entries(dots).flatMap(([sheet, text]) => project(sheet, text).map(([cx, cy], index) => <circle key={sheet + index} cx={cx} cy={cy} r="19" />))}
        </g>
        {labels.map(([kind, name, x, y, angle]) => (
            <text key={name} {...labelStyles[kind]} x={x} y={y} textAnchor="middle" transform={angle ? `rotate(${angle} ${x} ${y})` : undefined}>
                {name}
            </text>
        ))}
        <path id="slotsholmen" d="M948 2184 Q1080 2250 1260 2252" fill="none" />
        <text {...labelStyles.street} fontSize="50" fontWeight="500">
            <textPath href="#slotsholmen">Slotsholmen</textPath>
        </text>
        <g>
            <circle cx="111" cy="3028" r="42" fill="#fff" fillOpacity="0.85" stroke="#9da3ad" strokeWidth="7" />
            <path d="M92 3046 C88 3016 97 3006 114 3006 A22 22 0 0 1 114 3046 Z" fill="#9aa1b0" />
            <path d="M115 3011 L119 3021 L129 3025 L119 3029 L115 3039 L111 3029 L101 3025 L111 3021 Z" fill="#fff" />
            <text x="163" y="3047" style={{ fontFamily: 'Lato', fontSize: 76, fontWeight: 900, fill: '#fff', stroke: '#a3a8b3', strokeWidth: 13 }}>
                mapbox
            </text>
        </g>
    </MapSvg>
)

const InfoIcon = ({ size, stroke }) => (
    <svg width={size} height={size} viewBox="0 0 74 74">
        <circle cx="37" cy="37" r={37 - stroke / 2} fill={theme.colors.soft} stroke={theme.colors.primary} strokeWidth={stroke} />
        <circle cx="37" cy="24" r="4" fill={theme.colors.primary} />
        <path d="M37 36 V52" stroke={theme.colors.primary} strokeWidth={stroke} strokeLinecap="round" />
    </svg>
)

const UndoIcon = () => (
    <svg width="62" height="62" viewBox="0 0 62 62" fill="none" stroke={theme.colors.primary} strokeWidth="7" strokeLinecap="round" strokeLinejoin="round">
        <path d="M18 4 L5 17 L18 30" />
        <path d="M5 17 H37 a20 20 0 0 1 0 40 H5" />
    </svg>
)

const ChevronIcon = () => (
    <svg viewBox="0 0 38 22" fill="none" stroke={theme.colors.ink} strokeWidth="3">
        <path d="M1 2 L19 20 L37 2" />
    </svg>
)

const distanceIcons = {
    tram: (
        <>
            <path d="M30 86 H130 V100 Q128 123 108 123 H52 Q32 123 30 100 Z" fill={theme.colors.soft} stroke="none" />
            <path d="M56 18 H105" />
            <path d="M80 20 V36" />
            <rect x="30" y="37" width="99" height="86" rx="24" />
            <path d="M30 80 H129" />
            <circle cx="58" cy="102" r="9" fill={theme.colors.primary} stroke="none" />
            <circle cx="102" cy="102" r="9" fill={theme.colors.primary} stroke="none" />
            <path d="M46 126 L40 143 M114 126 L120 143 M65 142 H96" />
        </>
    ),
    route: (
        <>
            <circle cx="38" cy="37" r="19" fill={theme.colors.soft} />
            <circle cx="123" cy="123" r="19" fill={theme.colors.soft} />
            <path d="M78 37 H98 C113 37 120 54 109 65 L51 103 C41 112 44 126 59 126 H83" />
        </>
    ),
    cart: (
        <>
            <path d="M19 16 H26 C31 16 32 19 33 24 L43 92 C44 101 48 105 55 105 H118 C126 105 131 101 132 93 L141 48 C142 43 140 40 135 40 H36" fill="none" />
            <path d="M42 46 H134 L126 93 Q125 99 118 99 H56 Q50 99 49 93 Z" fill={theme.colors.soft} stroke="none" />
            <circle cx="62" cy="132" r="12" fill={theme.colors.primary} stroke="none" />
            <circle cx="111" cy="132" r="12" fill={theme.colors.primary} stroke="none" />
        </>
    ),
    openBook: (
        <>
            <path d="M85 50 C85 30 78 20 64 20 H36 C27 20 24 23 24 32 V101 C24 110 27 113 36 113 H62 C74 113 80 117 85 128 Z" fill={theme.colors.soft} />
            <path d="M85 50 C85 30 92 20 106 20 H134 C143 20 146 23 146 32 V101 C146 110 143 113 134 113 H108 C96 113 90 117 85 128 Z" />
        </>
    ),
    book: (
        <>
            <rect x="31" y="13" width="100" height="124" rx="15" />
            <path d="M37 19 H125 V100 H48 Q40 101 37 106 Z" fill={theme.colors.soft} stroke="none" />
            <path d="M31 119 C31 106 38 100 48 100 H131" />
        </>
    ),
    cap: (
        <>
            <path d="M37 70 V104 C37 108 39 111 42 112 L81 130 L120 112 C123 111 125 108 125 104 V70" />
            <path d="M81 27 L137 53 Q146 57 137 61 L81 87 L25 61 Q16 57 25 53 Z" fill={theme.colors.soft} />
        </>
    ),
}

const distances = [
    { icon: 'tram', name: 'Tog', value: '138 m' },
    { icon: 'route', name: 'Motorvej', value: '4.770 m' },
    { icon: 'cart', name: 'Dagligvarer', value: '172 m' },
    { icon: 'openBook', name: 'Folkeskole', value: '636 m' },
    { icon: 'book', name: 'Gymnasie', value: '960 m' },
    { icon: 'cap', name: 'Universitet', value: '688 m' },
]

const rows = [
    ['Aktiviteter inden for sundhedsvæsen', '137'],
    ['Biblioteks-, arkiv- og museumsaktiviteter samt andre kulturelle aktiviteter', '26'],
    ['Detailhandel', '375'],
    ['Personlige serviceydelser', '90'],
    ['Restaurationsaktiviteter', '398'],
    ['Sociale foranstaltninger uden institutionsophold', '10'],
    ['Sportsaktiviteter, forlystelser og fritidsaktiviteter', '16'],
    ['Undervisning', '27'],
]

const SelectField = ({ id, value }) => (
    <SelectWrap>
        <StyledSelect id={id} defaultValue={value}>
            <option>{value}</option>
        </StyledSelect>
        <ChevronIcon />
    </SelectWrap>
)

const TopBar = () => (
    <Header>
        <Logo viewBox="0 0 130 106">
            <path d="M77 4 Q79 0 84 3 L118 32 Q129 41 129 54 V90 H115 V52 Q114 44 108 39 L76 13 Q73 9 77 4 Z" fill="#e1e3e3" />
            <path d="M50 3 L90 38 Q99 46 99 56 V99 Q99 103 95 103 H4 Q0 103 0 99 V56 Q0 46 9 38 Z" fill={theme.colors.primary} />
        </Logo>
        <ToolButton type="button">
            Info
            <IconSlot>
                <InfoIcon size={74} stroke={7} />
            </IconSlot>
        </ToolButton>
        <ToolButton type="button">
            Nulstil
            <IconSlot>
                <UndoIcon />
            </IconSlot>
        </ToolButton>
        <HeaderField>
            <FieldLabel htmlFor="branches" $inset={8}>Udvalgte brancher: Naviger gennem 4 brancheniveauer, afslutningsvis branchekode</FieldLabel>
            <SelectField id="branches" value="Flere markeringer" />
        </HeaderField>
        <FilterSummary>
            <p>Valgte filtre</p>
            <p>Branchekode: (192 valgte), Branche: (6 valgte), Region: Hovedstaden,</p>
        </FilterSummary>
    </Header>
)

const MapPanel = () => (
    <MapCard>
        <Title>
            Interessepunkter
            <InfoIcon size={38} stroke={6} />
        </Title>
        <Text $top={23}>Interessepunkter indenfor den valgte afstand fra den valgte adresse.</Text>
        <MapFrame>
            <CityMap />
            <DrawTools>
                <MapButton type="button" aria-label="Lasso">
                    <svg viewBox="0 0 60 66" fill="none" stroke="#5b6275" strokeWidth="4">
                        <path d="M14 34 C4 22 14 13 30 13 C48 13 54 22 50 32" />
                        <path d="M12 30 C20 26 26 34 18 38 C12 40 12 46 6 49" />
                        <path d="M28 32 L56 36 L44 41 L41 52 Z" fill="#3f4763" stroke="none" />
                    </svg>
                </MapButton>
                <MapButton type="button" aria-label="Polygon">
                    <svg viewBox="0 0 60 66" fill={theme.colors.ink}>
                        <path d="M15 19 H45 V49 H15 Z" fill="none" stroke={theme.colors.ink} strokeWidth="7" />
                        <circle cx="15" cy="19" r="7" />
                        <circle cx="45" cy="19" r="7" />
                        <circle cx="15" cy="49" r="7" />
                        <circle cx="45" cy="49" r="7" />
                    </svg>
                </MapButton>
            </DrawTools>
            <SearchBox>
                <svg viewBox="0 0 44 44" fill="none" stroke={theme.colors.ink} strokeLinecap="round">
                    <circle cx="18" cy="17" r="12" strokeWidth="5" />
                    <path d="M28 26 L38 36" strokeWidth="7" />
                </svg>
                <SearchInput type="search" placeholder="Search" aria-label="Search" />
            </SearchBox>
            <ZoomTools>
                <MapButton type="button" aria-label="Zoom ind">
                    <svg viewBox="0 0 60 66" stroke="#272d45" strokeWidth="9" strokeLinecap="round">
                        <path d="M15 33 H45 M30 18 V48" />
                    </svg>
                </MapButton>
                <MapButton type="button" aria-label="Zoom ud">
                    <svg viewBox="0 0 60 66" stroke="#272d45" strokeWidth="9" strokeLinecap="round">
                        <path d="M15 33 H45" />
                    </svg>
                </MapButton>
                <MapButton type="button" aria-label="Nulstil retning">
                    <svg viewBox="0 0 60 66">
                        <path d="M17 31 L30 6 L43 31 Z" fill="#272d45" />
                        <path d="M17 37 L30 62 L43 37 Z" fill="#c8cacd" />
                    </svg>
                </MapButton>
            </ZoomTools>
            <PinTools>
                <MapButton type="button" aria-label="Find sted">
                    <svg viewBox="0 0 60 66" fill="none" stroke="#5c6371">
                        <circle cx="28" cy="23" r="19" strokeWidth="7" />
                        <path d="M28 33 C22 26 20 23 20 20 A8 8 0 0 1 36 20 C36 23 34 26 28 33 Z" fill="#5c6371" stroke="none" />
                        <circle cx="28" cy="20" r="3" fill="#fff" stroke="none" />
                        <path d="M39 45 L48 63" strokeWidth="12" />
                    </svg>
                </MapButton>
            </PinTools>
            <AttributionButton type="button" aria-label="Kortoplysninger">
                <svg viewBox="0 0 48 48">
                    <circle cx="24" cy="24" r="24" fill={theme.colors.ink} />
                    <circle cx="24" cy="12" r="4" fill="#fff" />
                    <path d="M24 24 V35" stroke="#fff" strokeWidth="8" strokeLinecap="round" />
                </svg>
            </AttributionButton>
        </MapFrame>
    </MapCard>
)

const AddressPanel = () => (
    <FilterCard>
        <Title>Se interessepunkter og afstande omkring den valgte adresse</Title>
        <Text>Vælg en by, adresse, og afstand fra adressen indenfor hvilken interessepunkter vises.</Text>
        <FilterRow>
            <FieldBox>
                <FieldLabel htmlFor="region" $inset={12}>1. Vælg en region</FieldLabel>
                <SelectField id="region" value="Hovedstaden" />
            </FieldBox>
            <FieldBox>
                <FieldLabel htmlFor="address" $inset={8}>2. Vælg en adresse</FieldLabel>
                <SelectField id="address" value="Admiralgade 20, 1000-1499 København K" />
            </FieldBox>
            <FieldBox $fit>
                <FieldLabel htmlFor="distance">3. Vælg afstand fra adressen</FieldLabel>
                <DistanceInput id="distance" defaultValue="1.000 meter" />
            </FieldBox>
        </FilterRow>
    </FilterCard>
)

const DistancePanel = () => (
    <Card>
        <Title>Afstand til interessepunkter</Title>
        <Text>Find herunder distancen fra din valgte adresse til nærmeste relevante interessepunkter i lige linje.</Text>
        <DistanceList>
            {distances.map(({ icon, name, value }) => (
                <DistanceItem key={name}>
                    <svg viewBox="0 0 160 160" fill="none" stroke={theme.colors.primary} strokeWidth="12" strokeLinecap="round" strokeLinejoin="round">
                        {distanceIcons[icon]}
                    </svg>
                    <div>
                        <DistanceName>{name}</DistanceName>
                        <DistanceValue>{value}</DistanceValue>
                    </div>
                </DistanceItem>
            ))}
        </DistanceList>
    </Card>
)

const BranchPanel = () => {
    const [view, setView] = React.useState('Brancher')

    return (
        <TableCard>
            <TableHeading>
                <Title>Interessepunkter</Title>
                <Toggle>
                    {['Brancher', 'Produktionsenheder'].map((name) => (
                        <ToggleButton key={name} type="button" $active={view === name} onClick={() => setView(name)}>
                            {name}
                        </ToggleButton>
                    ))}
                </Toggle>
            </TableHeading>
            <Text $top={16} $leading={41}>
                Brancher, og antallet af produktionsenheder, indenfor den valgte afstand af adressen. Tabellen er opgjort i 3 brancheniveauer, efterfulgt af
                <br />
                produktionsenheder. Tryk på + ikonet for at en række udvide til næste niveau.
            </Text>
            <TableArea>
                <Table>
                    <thead>
                        <tr>
                            <HeadCell>
                                Branche
                                <svg viewBox="0 0 26 12">
                                    <path d="M0 12 L13 0 L26 12 Z" fill={theme.colors.muted} />
                                </svg>
                            </HeadCell>
                            <HeadCell>Produktionsenheder</HeadCell>
                        </tr>
                    </thead>
                    <tbody>
                        {rows.map(([name, count]) => (
                            <BodyRow key={name}>
                                <td>
                                    <NameCell>
                                        <ExpandButton type="button" aria-label={`Udvid ${name}`}>
                                            <svg viewBox="0 0 26 26" fill="none" stroke="#6b7085" strokeWidth="2">
                                                <rect x="1" y="1" width="24" height="24" rx="3" />
                                                <path d="M13 6 V20 M6 13 H20" />
                                            </svg>
                                        </ExpandButton>
                                        {name}
                                    </NameCell>
                                </td>
                                <NumberCell>{count}</NumberCell>
                            </BodyRow>
                        ))}
                    </tbody>
                    <tfoot>
                        <TotalRow>
                            <td>Total</td>
                            <NumberCell>1.079</NumberCell>
                        </TotalRow>
                    </tfoot>
                </Table>
                <ScrollThumb />
            </TableArea>
        </TableCard>
    )
}

const App = () => (
    <ThemeProvider theme={theme}>
        <GlobalStyle />
        <Page>
            <TopBar />
            <Columns>
                <MapPanel />
                <Stack>
                    <AddressPanel />
                    <DistancePanel />
                    <BranchPanel />
                </Stack>
            </Columns>
        </Page>
    </ThemeProvider>
)

export default App
